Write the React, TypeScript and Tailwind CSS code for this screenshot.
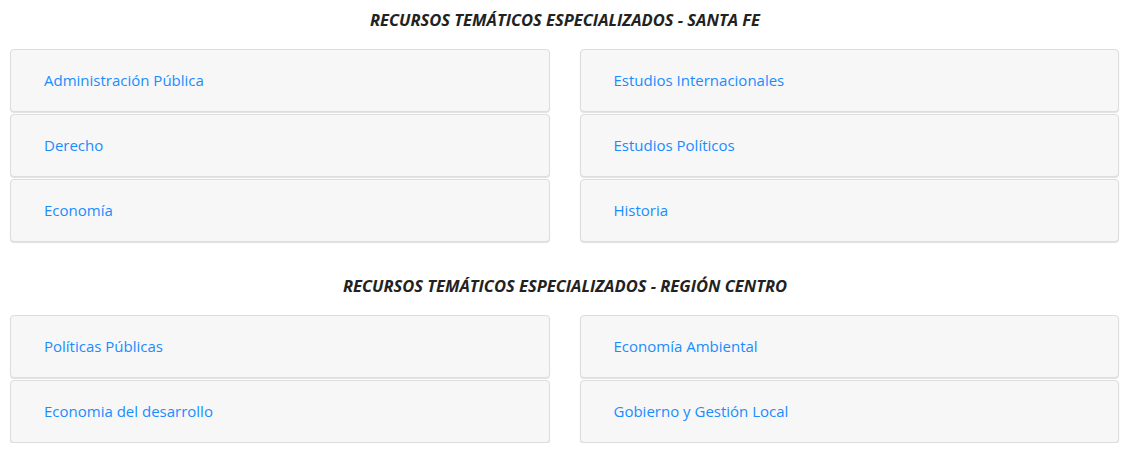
import React from 'react';

const sections = [
  {
    title: 'RECURSOS TEMÁTICOS ESPECIALIZADOS - SANTA FE',
    left: ['Administración Pública', 'Derecho', 'Economía'],
    right: ['Estudios Internacionales', 'Estudios Políticos', 'Historia'],
  },
  {
    title: 'RECURSOS TEMÁTICOS ESPECIALIZADOS - REGIÓN CENTRO',
    left: ['Políticas Públicas', 'Economia del desarrollo'],
    right: ['Economía Ambiental', 'Gobierno y Gestión Local'],
  },
];

function Card({ label }: { label: string }) {
  return (
    <a
      href="#"
      className="flex h-[63px] items-center rounded-[4px] border border-[#dddddd] bg-[#f7f7f7] pl-[33px] text-[15px] text-[#1a8cff] shadow-[0_1px_1px_rgba(0,0,0,0.12)]"
    >
      {label}
    </a>
  );
}

export default function App() {
  return (
    <div className="w-[1130px] bg-white px-[10px] pt-[10px] font-['Open_Sans',sans-serif]">
      {sections.map((s, i) => (
        <section key={s.title} className={i > 0 ? 'mt-[34px]' : ''}>
          <h2 className="mb-[19px] text-center text-[16.5px] leading-[20px] font-bold italic text-[#222]">
            {s.title}
          </h2>
          <div className="grid grid-cols-2 gap-x-[30px] pr-[1px]">
            <div className="flex flex-col gap-[2px]">
              {s.left.map((l) => (
                <Card key={l} label={l} />
              ))}
            </div>
            <div className="flex flex-col gap-[2px]">
              {s.right.map((l) => (
                <Card key={l} label={l} />
              ))}
            </div>
          </div>
        </section>
      ))}
    </div>
  );
}
